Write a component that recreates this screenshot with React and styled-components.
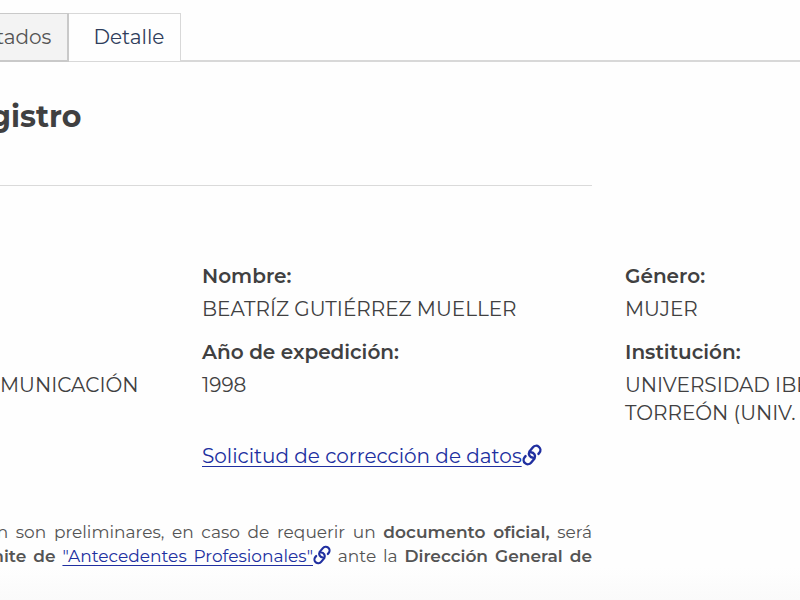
import React from "react";
import styled, { createGlobalStyle } from "styled-components";

const GlobalStyle = createGlobalStyle`
  * { box-sizing: border-box; }
  body {
    margin: 0;
    background: #fefefe;
    color: #404041;
    font-family: Montserrat, Inter, sans-serif;
    font-size: 20px;
    line-height: 28px;
  }
`;

const Page = styled.div`
  min-height: 100vh;
  overflow: hidden;
  padding-top: 13px;
  background: linear-gradient(to top, #fafafa, #fefefe 32px);
`;

const TabBar = styled.div`
  display: flex;
  height: 49px;
  border-bottom: 2px solid #d8d8d8;
`;

const Tab = styled.button`
  height: ${(p) => (p.$active ? "48px" : "49px")};
  padding: ${(p) => (p.$active ? "0 16px 2px 24px" : "0 16px 0 0")};
  border: solid #d8d8d8;
  border-width: ${(p) => (p.$active ? "1px 1px 0 0" : "1px 2px 2px 0")};
  border-color: ${(p) => (p.$active ? "#d8d8d8" : "#c9c9c9")};
  background: ${(p) => (p.$active ? "#fefefe" : "#f3f3f3")};
  color: ${(p) => (p.$active ? "#2f3d5c" : "#545454")};
  font: inherit;
`;

const TabText = styled.span`
  display: block;
  margin-left: ${(p) => (p.$cut ? "-4px" : "0")};
`;

const Heading = styled.h3`
  width: 74%;
  margin: 35px 0 0;
  padding-bottom: 48px;
  border-bottom: 1px solid #dadada;
  font-size: 30px;
  line-height: 40px;
  font-weight: 700;
`;

const HeadingText = styled.span`
  display: block;
  margin-left: -10px;
`;

const Details = styled.dl`
  display: grid;
  grid-template-columns: 202fr 423fr 175fr;
  row-gap: 15px;
  margin: 76px 0 0;
`;

const Field = styled.div`
  min-width: 0;
  padding-top: ${(p) => (p.$bare ? "33px" : "0")};
  white-space: nowrap;
`;

const Term = styled.dt`
  margin-bottom: 5px;
  font-weight: 600;
`;

const Value = styled.dd`
  margin: 0;
`;

const RequestRow = styled.div`
  margin: 15px 0 0 25.25%;
`;

const Link = styled.a`
  color: #202fa0;
  white-space: nowrap;
  text-decoration: none;
`;

const LinkText = styled.span`
  text-decoration: underline;
  text-decoration-thickness: 1px;
  text-decoration-skip-ink: none;
  text-underline-offset: 3px;
`;

const Icon = styled.svg`
  width: ${(p) => p.$size}px;
  height: ${(p) => p.$size}px;
  overflow: visible;
  vertical-align: -2px;
`;

const Notice = styled.p`
  width: 75.75%;
  margin: 50px 0 0 -14px;
  color: #545454;
  font-size: 17px;
  line-height: 24px;
  text-align: justify;
  text-align-last: justify;
  white-space: nowrap;

  b {
    font-weight: 600;
  }
`;

function ChainIcon({ size }) {
  return (
    <Icon $size={size} viewBox="-10 -10 20 20" fill="none" aria-hidden="true">
      <g
        transform="rotate(-50)"
        stroke="currentColor"
        strokeWidth="2.4"
        strokeLinecap="round"
        strokeLinejoin="round"
      >
        <path d="M5 4.200H6.500A4.200 4.200 0 0 0 6.500 -4.200H1A4.200 4.200 0 0 0 -1.400 2.600" />
        <path d="M-5 -4.200H-6.500A4.200 4.200 0 0 0 -6.500 4.200H-1A4.200 4.200 0 0 0 1.400 -2.600" />
      </g>
    </Icon>
  );
}

const fields = [
  { value: null },
  { term: "Nombre:", value: ["BEATRÍZ GUTIÉRREZ MUELLER"] },
  { term: "Género:", value: ["MUJER"] },
  { value: ["MUNICACIÓN"] },
  { term: "Año de expedición:", value: ["1998"] },
  { term: "Institución:", value: ["UNIVERSIDAD IBEROAMERICANA", "TORREÓN (UNIV."] },
];

export default function App() {
  return (
    <Page>
      <GlobalStyle />
      <TabBar role="tablist">
        <Tab role="tab" aria-selected="false">
          <TabText $cut>tados</TabText>
        </Tab>
        <Tab role="tab" aria-selected="true" $active>
          <TabText>Detalle</TabText>
        </Tab>
      </TabBar>
      <Heading>
        <HeadingText>gistro</HeadingText>
      </Heading>
      <Details>
        {fields.map((f, i) => (
          <Field key={i} $bare={!f.term}>
            {f.term && <Term>{f.term}</Term>}
            {f.value && f.value.map((line) => <Value key={line}>{line}</Value>)}
          </Field>
        ))}
      </Details>
      <RequestRow>
        <Link href="#correccion">
          <LinkText>Solicitud de corrección de datos</LinkText>
          <ChainIcon size={20} />
        </Link>
      </RequestRow>
      <Notice>
        ón son preliminares, en caso de requerir un <b>documento oficial,</b> será
        <br />
        <b>mite de</b>{" "}
        <Link href="#antecedentes">
          <LinkText>"Antecedentes Profesionales"</LinkText>
          <ChainIcon size={18} />
        </Link>{" "}
        ante la <b>Dirección General de</b>
      </Notice>
    </Page>
  );
}
